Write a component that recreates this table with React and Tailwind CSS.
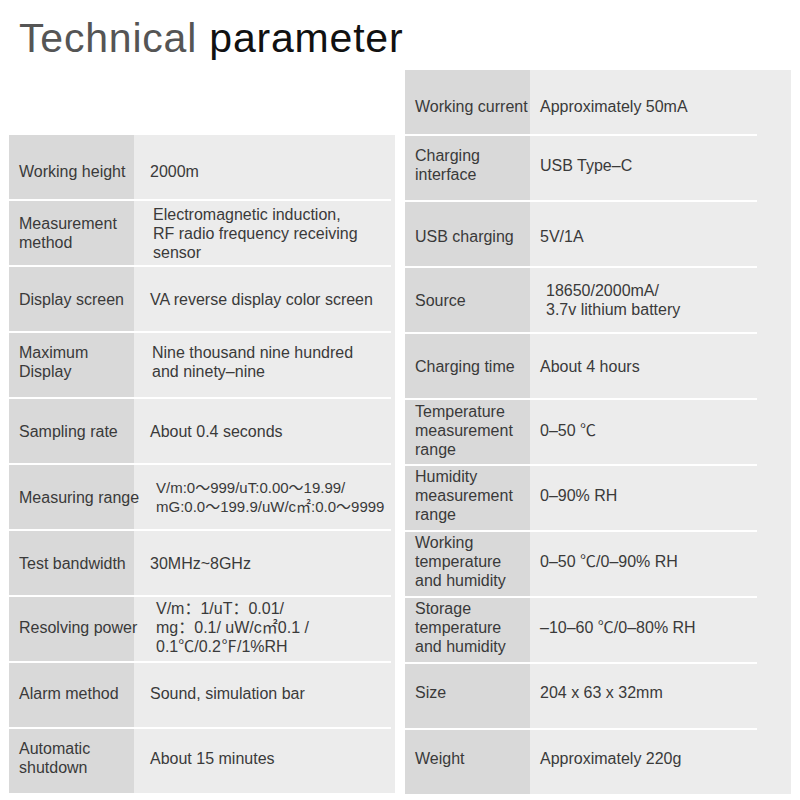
import React from 'react';

const leftRows = [
  { label: ['Working height'], value: ['2000m'], pt: 'pt-[8px]' },
  { label: ['Measurement', 'method'], value: ['Electromagnetic induction,', 'RF radio frequency receiving', 'sensor'], pv: 'pl-[19px]' },
  { label: ['Display screen'], value: ['VA reverse display color screen'] },
  { label: ['Maximum', 'Display'], value: ['Nine thousand nine hundred', 'and ninety–nine'], pv: 'pl-[18px]', pt: 'pb-[6px]' },
  { label: ['Sampling rate'], value: ['About 0.4 seconds'] },
  { label: ['Measuring range'], value: ['V/m:0〜999/uT:0.00〜19.99/', 'mG:0.0〜199.9/uW/c㎡:0.0〜9999'], pv: 'pl-[22px] text-[15px]' },
  { label: ['Test bandwidth'], value: ['30MHz~8GHz'] },
  { label: ['Resolving power'], value: ['V/m：1/uT：0.01/', 'mg：0.1/ uW/c㎡0.1 /', '0.1℃/0.2℉/1%RH'], pv: 'pl-[22px]', pt: 'pb-[4px]' },
  { label: ['Alarm method'], value: ['Sound, simulation bar'], pt: 'pb-[4px]' },
  { label: ['Automatic', 'shutdown'], value: ['About 15 minutes'], pt: 'pb-[6px]' },
];

const rightRows = [
  { label: ['Working current'], value: ['Approximately 50mA'], pt: 'pt-[8px]' },
  { label: ['Charging', 'interface'], value: ['USB Type–C'], pt: 'pb-[6px]' },
  { label: ['USB charging'], value: ['5V/1A'], pt: 'pt-[4px]' },
  { label: ['Source'], value: ['18650/2000mA/', '3.7v lithium battery'], pv: 'pl-[16px]' },
  { label: ['Charging time'], value: ['About 4 hours'] },
  { label: ['Temperature', 'measurement', 'range'], value: ['0–50 ℃'], pt: 'pb-[4px]' },
  { label: ['Humidity', 'measurement', 'range'], value: ['0–90% RH'], pt: 'pb-[6px]' },
  { label: ['Working', 'temperature', 'and humidity'], value: ['0–50 ℃/0–90% RH'], pt: 'pb-[6px]' },
  { label: ['Storage', 'temperature', 'and humidity'], value: ['–10–60 ℃/0–80% RH'], pt: 'pb-[6px]' },
  { label: ['Size'], value: ['204 x 63 x 32mm'], pt: 'pb-[8px]' },
  { label: ['Weight'], value: ['Approximately 220g'], pt: 'pb-[8px]' },
];

const Lines = ({ lines }) => (
  <div className="leading-[19px] whitespace-nowrap">
    {lines.map((l, i) => (
      <div key={i}>{l}</div>
    ))}
  </div>
);

const Table = ({ rows, valuePad, sepWidth }) => (
  <div className="w-[386px] bg-[#ececec] flex flex-col">
    {rows.map((r, i) => (
      <React.Fragment key={i}>
        {i > 0 && (
          <div className="flex h-[2px]">
            <div className={`${sepWidth} bg-white`}></div>
          </div>
        )}
        <div className="flex h-[64px]">
          <div className={`w-[125px] shrink-0 bg-[#d9d9d9] flex items-center pl-[10px] ${r.pt || ''}`}>
            <Lines lines={r.label} />
          </div>
          <div className={`flex-1 flex items-center ${r.pv || valuePad} ${r.pt || ''}`}>
            <Lines lines={r.value} />
          </div>
        </div>
      </React.Fragment>
    ))}
  </div>
);

export default function App() {
  return (
    <div
      className="w-[800px] h-[800px] bg-white overflow-hidden text-[16px] text-[#3a3a3a]"
      style={{ fontFamily: '"Liberation Sans", Arial, "Noto Sans CJK SC", sans-serif' }}
    >
      <div className="flex">
        <div className="w-[395px] shrink-0 pl-[9px] flex flex-col">
          <h1 className="pl-[10px] pt-[14px] h-[135px] text-[41px] leading-[48px] tracking-[0.8px] whitespace-nowrap">
            <span className="text-[#555555]">Technical</span>{' '}
            <span className="text-[#111111]">parameter</span>
          </h1>
          <Table rows={leftRows} valuePad="pl-[16px]" sepWidth="w-[382px]" />
        </div>
        <div className="pl-[10px] pt-[70px]">
          <Table rows={rightRows} valuePad="pl-[10px]" sepWidth="w-[352px]" />
        </div>
      </div>
    </div>
  );
}
